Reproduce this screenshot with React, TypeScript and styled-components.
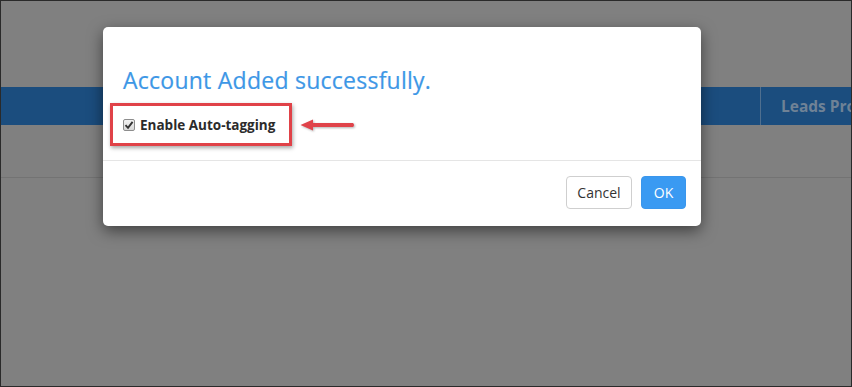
import React from "react";
import styled, { createGlobalStyle } from "styled-components";

const GlobalStyle = createGlobalStyle`
  html, body { margin: 0; padding: 0; background: #808080; }
  body { font-family: "Open Sans", "Noto Sans", sans-serif; }
  * { box-sizing: border-box; }
`;

const Frame = styled.div`
  position: relative;
  width: 852px;
  height: 387px;
  border: 1px solid #2a2a2a;
  background: #808080;
  overflow: hidden;
  display: flex;
  flex-direction: column;
`;

const TopSpace = styled.div`
  height: 86px;
`;

const NavBar = styled.div`
  height: 38px;
  background: #1b4d7e;
  display: flex;
  align-items: stretch;
`;

const NavCell = styled.div<{ $w?: number }>`
  ${(p) => (p.$w ? `width: ${p.$w}px; flex: none;` : "flex: 1;")}
  border-right: 1px solid #4f6f8f;
  display: flex;
  align-items: center;
  padding-left: 20px;
  color: #6f8296;
  font-weight: 700;
  font-size: 15.5px;
  white-space: nowrap;
  overflow: hidden;
  &:last-child { border-right: none; }
`;

const ContentRow = styled.div`
  height: 53px;
  border-bottom: 1px solid #737373;
`;

const Modal = styled.div`
  position: absolute;
  left: 102px;
  top: 26px;
  width: 598px;
  height: 199px;
  background: #fff;
  border-radius: 5px;
  box-shadow: 0 5px 15px rgba(0, 0, 0, 0.5);
  display: flex;
  flex-direction: column;
`;

const ModalBody = styled.div`
  padding: 41px 20px 0 20px;
  height: 134px;
  border-bottom: 1px solid #e5e5e5;
`;

const Title = styled.h3`
  margin: 0;
  font-size: 23px;
  line-height: 24px;
  font-weight: 500;
  color: #3d97e6;
  letter-spacing: 0.25px;
  -webkit-text-stroke: 0.2px #3d97e6;
`;

const OptionRow = styled.div`
  display: flex;
  align-items: center;
  margin-left: -13px;
  margin-top: 11px;
`;

const Highlight = styled.div`
  width: 182px;
  height: 43px;
  border: 3px solid #e04248;
  box-shadow: 1px 2px 4px rgba(0, 0, 0, 0.35);
  display: flex;
  align-items: center;
  padding-left: 10px;
  padding-top: 1px;
`;

const CheckLabel = styled.label`
  display: flex;
  align-items: center;
  gap: 5px;
  font-size: 13.5px;
  font-weight: 700;
  color: #2b2b2b;
  white-space: nowrap;
`;

const CheckBox = styled.span`
  position: relative;
  width: 12px;
  height: 12px;
  border: 1px solid #8d8d8d;
  border-radius: 2px;
  background: linear-gradient(#f2f2f2, #d8d8d8);
  display: inline-flex;
  align-items: center;
  justify-content: center;
  flex: none;
`;

const Arrow = styled.svg`
  margin-left: 8px;
  flex: none;
  filter: drop-shadow(1px 1px 1px rgba(0, 0, 0, 0.3));
`;

const Footer = styled.div`
  flex: 1;
  display: flex;
  justify-content: flex-end;
  align-items: flex-start;
  padding: 15px 15px 0 0;
  gap: 9px;
`;

const Button = styled.button<{ $primary?: boolean }>`
  height: 33px;
  padding: 0;
  border-radius: 4px;
  font-family: "Open Sans", "Noto Sans", sans-serif;
  font-size: 14px;
  border: 1px solid ${(p) => (p.$primary ? "#3a96ec" : "#cfcfcf")};
  background: ${(p) => (p.$primary ? "#3a9af2" : "#fff")};
  color: ${(p) => (p.$primary ? "#fff" : "#333")};
  width: ${(p) => (p.$primary ? "45px" : "66px")};
`;

export default function App() {
  return (
    <>
      <GlobalStyle />
      <Frame>
        <TopSpace />
        <NavBar>
          <NavCell $w={760} />
          <NavCell>Leads Pro</NavCell>
        </NavBar>
        <ContentRow />
        <Modal>
          <ModalBody>
            <Title>Account Added successfully.</Title>
            <OptionRow>
              <Highlight>
                <CheckLabel>
                  <CheckBox>
                    <svg width="10" height="10" viewBox="0 0 10 10">
                      <path d="M1.5 5.2 L4 7.8 L8.6 1.8" fill="none" stroke="#333" strokeWidth="1.9" />
                    </svg>
                  </CheckBox>
                  Enable Auto-tagging
                </CheckLabel>
              </Highlight>
              <Arrow width="56" height="14" viewBox="0 0 56 14">
                <path d="M0.5 7 L13 1.5 L13 5 L53 5 Q55 7 53 9 L13 9 L13 12.5 Z" fill="#e0434a" />
              </Arrow>
            </OptionRow>
          </ModalBody>
          <Footer>
            <Button>Cancel</Button>
            <Button $primary>OK</Button>
          </Footer>
        </Modal>
      </Frame>
    </>
  );
}
